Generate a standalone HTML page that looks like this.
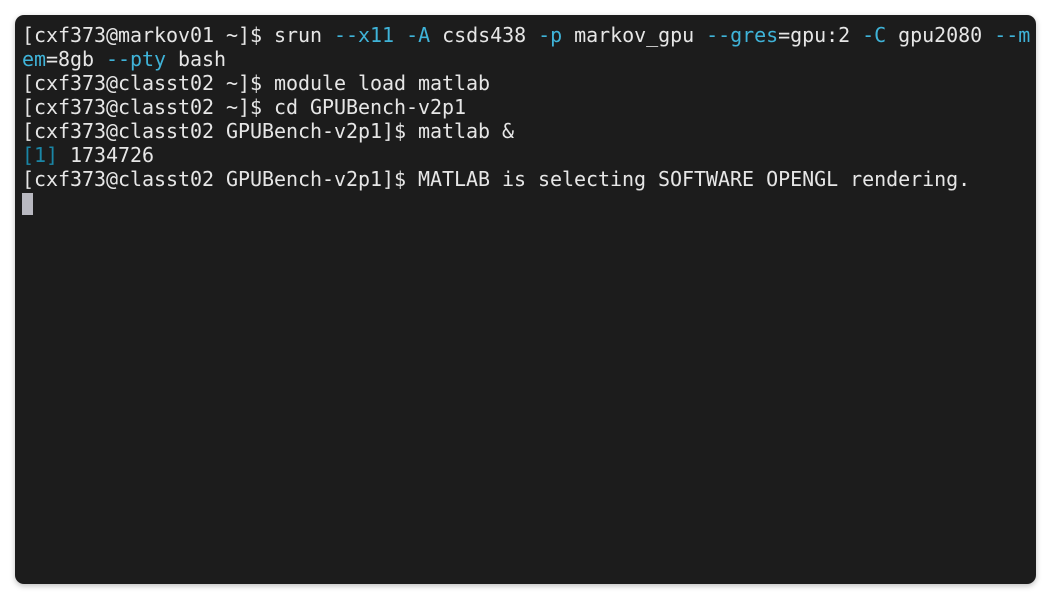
<!DOCTYPE html>
<html><head><meta charset="utf-8"><style>
html,body{margin:0;padding:0;background:#fff;width:1051px;height:599px;overflow:hidden}
.t{position:absolute;left:15px;top:15px;width:1021px;height:569px;background:#1c1c1c;border-radius:9px;box-shadow:0 2px 6px rgba(0,0,0,.25)}
pre{margin:0;position:absolute;left:7px;top:8px;font-family:"DejaVu Sans Mono","Liberation Mono",monospace;font-size:20px;line-height:24px;color:#e6e6e6;letter-spacing:-0.04px}
.c{color:#3fb3d8}.d{color:#1a86a6}
.cur{display:inline-block;width:11px;height:22px;background:#b8b8c0;vertical-align:-5px}
</style></head><body><div class="t"><pre>[cxf373@markov01 ~]$ srun <span class="c">--x11</span> <span class="c">-A</span> csds438 <span class="c">-p</span> markov_gpu <span class="c">--gres</span>=gpu:2 <span class="c">-C</span> gpu2080 <span class="c">--m</span>
<span class="c">em</span>=8gb <span class="c">--pty</span> bash
[cxf373@classt02 ~]$ module load matlab
[cxf373@classt02 ~]$ cd GPUBench-v2p1
[cxf373@classt02 GPUBench-v2p1]$ matlab &amp;
<span class="d">[1]</span> 1734726
[cxf373@classt02 GPUBench-v2p1]$ MATLAB is selecting SOFTWARE OPENGL rendering.
<span class="cur"></span></pre></div></body></html>
